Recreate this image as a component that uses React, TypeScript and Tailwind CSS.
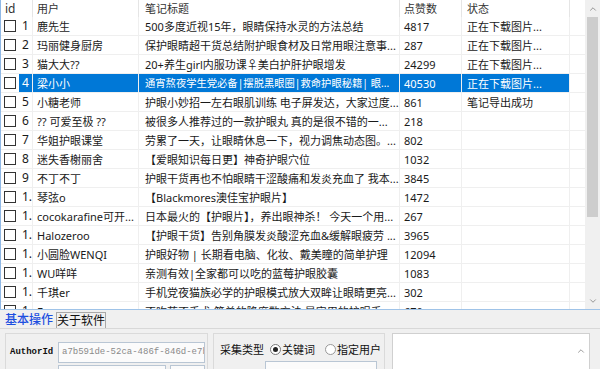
import React from "react";
import { ChevronUp, ChevronDown } from "lucide-react";

type Row = { id: string; user: string; title: string; likes: string; status?: string; sel?: boolean; tight?: boolean };

const rows: Row[] = [
  { id: "1", user: "鹿先生", title: "500多度近视15年，眼睛保持水灵的方法总结", likes: "4817", status: "正在下载图片..." },
  { id: "2", user: "玛丽健身厨房", title: "保护眼睛超干货总结附护眼食材及日常用眼注意事...", likes: "287", status: "正在下载图片..." },
  { id: "3", user: "猫大大??", title: "20+养生girl内服功课♀美白护肝护眼增发", likes: "24299", status: "正在下载图片..." },
  { id: "4", user: "梁小小", title: "通宵熬夜学生党必备|摆脱黑眼圈|救命护眼秘籍| 眼...", likes: "40530", status: "正在下载图片...", sel: true, tight: true },
  { id: "5", user: "小糖老师", title: "护眼小妙招一左右眼肌训练 电子屏发达，大家过度...", likes: "861", status: "笔记导出成功" },
  { id: "6", user: "?? 可爱至极 ??", title: "被很多人推荐过的一款护眼丸  真的是很不错的一...", likes: "218" },
  { id: "7", user: "华姐护眼课堂", title: "劳累了一天，让眼睛休息一下，视力调焦动态图。...", likes: "802" },
  { id: "8", user: "迷失香榭丽舍", title: "【爱眼知识每日更】神奇护眼穴位", likes: "1032" },
  { id: "9", user: "不丁不丁", title: "护眼干货再也不怕眼睛干涩酸痛和发炎充血了 我本...", likes: "3845" },
  { id: "1.", user: "琴弦o", title: "【Blackmores澳佳宝护眼片】", likes: "1472" },
  { id: "1.", user: "cocokarafine可开...", title: "日本最火的【护眼片】，养出眼神杀！ 今天一个用...", likes: "267" },
  { id: "1.", user: "Halozeroo", title: "【护眼干货】告别角膜发炎酸涩充血&缓解眼疲劳 ...", likes: "3965" },
  { id: "1.", user: "小圆脸WENQI", title: "护眼好物 | 长期看电脑、化妆、戴美瞳的简单护理", likes: "12094" },
  { id: "1.", user: "WU咩咩", title: "亲测有效|全家都可以吃的蓝莓护眼胶囊", likes: "1083" },
  { id: "1.", user: "千琪er", title: "手机党夜猫族必学的护眼模式放大双眸让眼睛更亮...", likes: "302" },
  { id: "1.", user: "Enson", title: "不吃药不手术 简单的降度数方法 是实用的护眼手...", likes: "670" },
];

const font = { fontFamily: '"Noto Sans", "Noto Sans CJK SC", sans-serif' };

function TableRow({ r }: { r: Row }) {
  const selBg = r.sel ? "bg-[#0078d7] text-white" : "";
  const cell = "h-full flex items-center overflow-hidden whitespace-nowrap border-r border-[#efefef]";
  return (
    <div className="flex h-[19px] shrink-0 border-b border-[#efefef] text-[11px] text-[#1a1a1a] leading-none">
      <div className="w-[32px] h-full flex items-center border-r border-[#efefef]">
        <div className="w-[18px] h-full flex items-center pl-[3px]">
          <div className="w-[12px] h-[12px] border border-[#333] bg-white" />
        </div>
        <div className={`flex-1 h-full flex items-center pl-[3px] text-[12px] ${selBg}`}>{r.id}</div>
      </div>
      <div className={`w-[106px] pl-[4px] ${cell} ${selBg}`}>{r.user}</div>
      <div className={`w-[261px] pl-[6px] ${cell} ${selBg}`}>
        <span className={r.tight ? "text-[10.3px]" : ""}>{r.title}</span>
      </div>
      <div className={`w-[62px] pl-[4px] ${cell} ${selBg}`}>{r.likes}</div>
      <div className={`w-[108px] pl-[5px] ${cell} ${selBg}`}>{r.status ?? ""}</div>
      <div className="w-[15px] h-full" />
    </div>
  );
}

export default function App() {
  return (
    <div className="w-[600px] h-[369px] overflow-hidden bg-white flex flex-col" style={font}>
      <div className="h-[309px] flex overflow-hidden border-l border-[#8fb8e6] shrink-0">
        <div className="w-[584px] flex flex-col overflow-hidden">
          <div className="flex h-[17px] shrink-0 text-[11px] text-[#333] leading-none">
            <div className="w-[32px] h-full flex items-center pl-[4px] text-[12px] border-r border-[#e5e5e5]">id</div>
            <div className="w-[106px] h-full flex items-center pl-[4px] border-r border-[#e5e5e5]">用户</div>
            <div className="w-[261px] h-full flex items-center pl-[6px] border-r border-[#e5e5e5]">笔记标题</div>
            <div className="w-[62px] h-full flex items-center pl-[4px] border-r border-[#e5e5e5]">点赞数</div>
            <div className="w-[108px] h-full flex items-center pl-[5px] border-r border-[#e5e5e5]">状态</div>
            <div className="w-[15px] h-full" />
          </div>
          {rows.map((r, i) => (
            <TableRow key={i} r={r} />
          ))}
        </div>
        <div className="w-[15px] h-full bg-[#f0f0f0] flex flex-col items-center">
          <div className="h-[17px] w-full flex items-center justify-center">
            <ChevronUp size={10} strokeWidth={1.5} color="#606060" />
          </div>
          <div className="w-[11px] h-[200px] bg-[#cdcdcd]" />
          <div className="flex-1" />
          <div className="h-[17px] w-full flex items-center justify-center">
            <ChevronDown size={10} strokeWidth={1.5} color="#606060" />
          </div>
        </div>
      </div>
      <div className="flex-1 bg-[#f0f0f0] border-t border-[#9fc3e8] flex flex-col overflow-hidden">
        <div className="h-[18px] flex items-end shrink-0 pl-[2px] text-[12px] leading-none">
          <div className="w-[54px] h-[17px] flex items-center justify-center text-[#1d4fe0] font-medium">基本操作</div>
          <div className="w-[50px] h-[16px] flex items-center justify-center border border-b-0 border-[#a8a8a8] text-[#111]">关于软件</div>
        </div>
        <div className="flex-1 border-t border-[#d8d8d8] flex pt-[4px] pl-[5px] gap-[5px]">
          <div className="w-[203px] h-[60px] border border-[#dadada] flex flex-col pl-[4px] pt-[8px]">
            <div className="flex items-center">
              <span className="w-[48px] text-[9px] font-bold text-[#111]" style={{ fontFamily: '"Liberation Mono", monospace' }}>AuthorId</span>
              <div className="w-[147px] h-[21px] border border-[#b9c6d4] bg-[#fbfbfb] flex items-center pl-[3px] overflow-hidden whitespace-nowrap text-[9px] text-[#8a8a8a]" style={{ fontFamily: '"Liberation Mono", monospace' }}>
                a7b591de-52ca-486f-846d-e7b2
              </div>
            </div>
            <div className="flex mt-[2px] pl-[48px] gap-[4px]">
              <div className="w-[108px] h-[20px] border border-[#b9c6d4] bg-[#fbfbfb]" />
              <div className="w-[35px] h-[20px] border border-[#b9c6d4] bg-[#fbfbfb]" />
            </div>
          </div>
          <div className="w-[172px] h-[60px] border border-[#dadada] flex flex-col pl-[6px] pt-[10px] text-[11px] text-[#111] leading-none">
            <div className="flex items-center" style={{ fontFamily: '"Noto Sans CJK SC", sans-serif' }}>
              <span className="mr-[6px]">采集类型</span>
              <span className="w-[11px] h-[11px] rounded-full border border-[#777] bg-white flex items-center justify-center mr-[1px]">
                <span className="w-[5px] h-[5px] rounded-full bg-[#222]" />
              </span>
              <span className="mr-[10px]">关键词</span>
              <span className="w-[11px] h-[11px] rounded-full border border-[#999] bg-white mr-[1px]" />
              <span>指定用户</span>
            </div>
            <div className="ml-[45px] mt-[6px] w-[112px] h-[20px] border border-[#b9c6d4] bg-[#fbfbfb]" />
          </div>
          <div className="w-[198px] h-[60px] ml-[2px] border border-[#d0d0d0] bg-white flex justify-end">
            <div className="w-[17px] h-full flex justify-center pt-[12px]">
              <ChevronUp size={10} strokeWidth={1.5} color="#606060" />
            </div>
          </div>
        </div>
      </div>
    </div>
  );
}
